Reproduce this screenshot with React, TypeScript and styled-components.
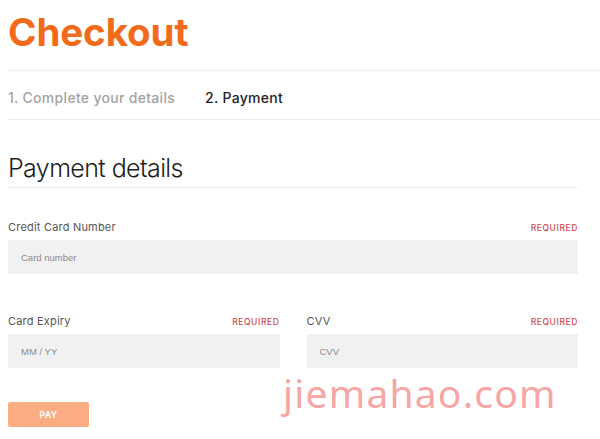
import React from 'react';
import styled, { createGlobalStyle } from 'styled-components';

const GlobalStyle = createGlobalStyle`
  html, body {
    margin: 0;
    padding: 0;
    background: #fff;
    font-family: Inter, "Liberation Sans", sans-serif;
  }
`;

const Page = styled.div`
  position: relative;
  width: 600px;
  height: 439px;
  overflow: hidden;
  padding-left: 8px;
  box-sizing: border-box;
`;

const Title = styled.h1`
  margin: 0;
  padding-top: 9px;
  height: 70px;
  box-sizing: border-box;
  font-size: 38.5px;
  line-height: 46px;
  font-weight: 700;
  letter-spacing: -0.1px;
  color: #f26a1b;
`;

const Steps = styled.div`
  display: flex;
  align-items: center;
  gap: 30px;
  height: 50px;
  padding-top: 5px;
  box-sizing: border-box;
  border-top: 1px solid #ececec;
  border-bottom: 1px solid #ececec;
`;

const Step = styled.span<{ $active?: boolean }>`
  font-size: 14px;
  font-weight: 500;
  letter-spacing: 0.3px;
  color: ${({ $active }) => ($active ? '#222' : '#a3a3a3')};
`;

const Form = styled.div`
  width: 570px;
`;

const SectionTitle = styled.h2`
  margin: 0;
  padding-top: 32px;
  padding-bottom: 3px;
  font-size: 25px;
  line-height: 32px;
  font-weight: 300;
  letter-spacing: -0.6px;
  color: #1d1d1d;
  border-bottom: 1px solid #eeeeee;
`;

const Row = styled.div<{ $space: number }>`
  display: flex;
  gap: 27px;
  margin-top: ${({ $space }) => $space}px;
`;

const Field = styled.div`
  flex: 1;
  display: flex;
  flex-direction: column;
`;

const LabelRow = styled.div`
  display: flex;
  justify-content: space-between;
  align-items: baseline;
  height: 20px;
  padding-top: 2px;
`;

const Label = styled.label`
  font-size: 11px;
  letter-spacing: 0.2px;
  color: #555;
`;

const Required = styled.span`
  font-size: 8.5px;
  font-weight: 500;
  letter-spacing: 0.6px;
  color: #cf4a50;
`;

const Input = styled.input`
  height: 34px;
  border: none;
  background: #f1f1f1;
  padding: 0 13px;
  font-family: "Liberation Sans", Arial, sans-serif;
  font-size: 9.5px;
  color: #333;
  outline: none;
  &::placeholder {
    color: #8a8a8a;
  }
`;

const PayButton = styled.button`
  margin-top: 34px;
  width: 81px;
  height: 25px;
  border: none;
  border-radius: 2px;
  background: #fbac83;
  color: #fff;
  font-family: Inter, "Liberation Sans", sans-serif;
  font-size: 8.5px;
  font-weight: 700;
  letter-spacing: 0.4px;
`;

const Watermark = styled.div`
  position: absolute;
  left: 283px;
  top: 366px;
  font-family: "Noto Sans", sans-serif;
  font-size: 39px;
  font-weight: 400;
  letter-spacing: 1.2px;
  color: #f5a6a5;
  pointer-events: none;
`;

export default function App() {
  return (
    <Page>
      <GlobalStyle />
      <Title>Checkout</Title>
      <Steps>
        <Step>1. Complete your details</Step>
        <Step $active>2. Payment</Step>
      </Steps>
      <Form>
        <SectionTitle>Payment details</SectionTitle>
        <Row $space={30}>
          <Field>
            <LabelRow>
              <Label>Credit Card Number</Label>
              <Required>REQUIRED</Required>
            </LabelRow>
            <Input placeholder="Card number" />
          </Field>
        </Row>
        <Row $space={38}>
          <Field>
            <LabelRow>
              <Label>Card Expiry</Label>
              <Required>REQUIRED</Required>
            </LabelRow>
            <Input placeholder="MM / YY" />
          </Field>
          <Field>
            <LabelRow>
              <Label>CVV</Label>
              <Required>REQUIRED</Required>
            </LabelRow>
            <Input placeholder="CVV" />
          </Field>
        </Row>
        <PayButton>PAY</PayButton>
      </Form>
      <Watermark>jiemahao.com</Watermark>
    </Page>
  );
}
